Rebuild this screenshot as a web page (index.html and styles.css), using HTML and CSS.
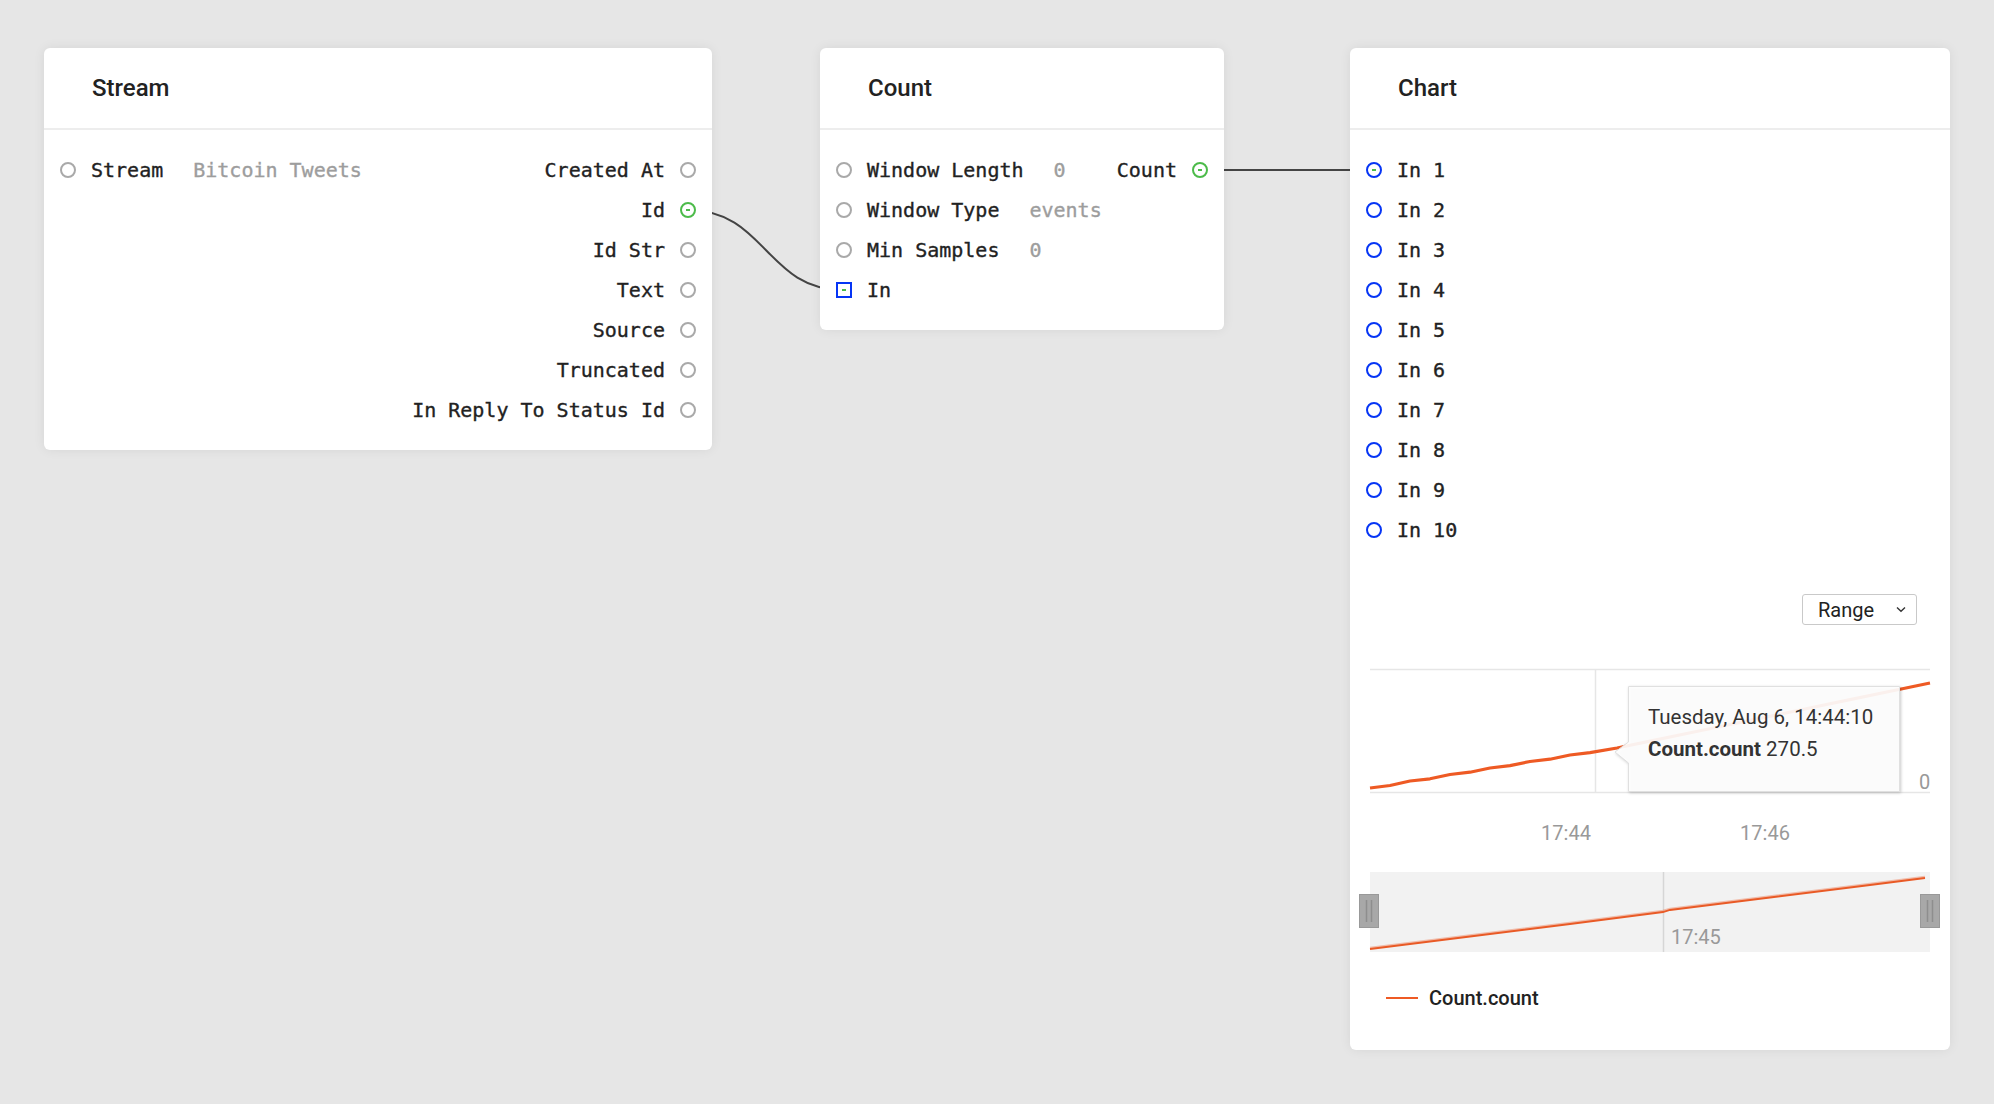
FILE: index.html
```html
<!DOCTYPE html>
<html>
<head>
<meta charset="utf-8">
<title>Flow</title>
<link rel="stylesheet" href="styles.css">
</head>
<body>
<div class="canvas">
  <svg class="wires" width="1994" height="1104" viewBox="0 0 1994 1104">
    <path d="M688 210 C766 210 766 290 843 290"/>
    <path d="M1200 170 L1374 170"/>
  </svg>

  <div class="node node-stream">
    <div class="node-head">Stream</div>
    <div class="node-body">
      <div class="ports ports-in">
        <div class="row"><span class="port"></span><span class="label">Stream</span><span class="value">Bitcoin Tweets</span></div>
      </div>
      <div class="ports ports-out">
        <div class="row"><span class="label">Created At</span><span class="port"></span></div>
        <div class="row"><span class="label">Id</span><span class="port on"></span></div>
        <div class="row"><span class="label">Id Str</span><span class="port"></span></div>
        <div class="row"><span class="label">Text</span><span class="port"></span></div>
        <div class="row"><span class="label">Source</span><span class="port"></span></div>
        <div class="row"><span class="label">Truncated</span><span class="port"></span></div>
        <div class="row"><span class="label">In Reply To Status Id</span><span class="port"></span></div>
      </div>
    </div>
  </div>

  <div class="node node-count">
    <div class="node-head">Count</div>
    <div class="node-body">
      <div class="ports ports-in">
        <div class="row"><span class="port"></span><span class="label">Window Length</span><span class="value">0</span></div>
        <div class="row"><span class="port"></span><span class="label">Window Type</span><span class="value">events</span></div>
        <div class="row"><span class="port"></span><span class="label">Min Samples</span><span class="value">0</span></div>
        <div class="row"><span class="port blue square dot"></span><span class="label">In</span></div>
      </div>
      <div class="ports ports-out">
        <div class="row"><span class="label">Count</span><span class="port on"></span></div>
      </div>
    </div>
  </div>

  <div class="node node-chart">
    <div class="node-head">Chart</div>
    <div class="ports ports-in chart-inputs">
      <div class="row"><span class="port blue dot"></span><span class="label">In 1</span></div>
      <div class="row"><span class="port blue"></span><span class="label">In 2</span></div>
      <div class="row"><span class="port blue"></span><span class="label">In 3</span></div>
      <div class="row"><span class="port blue"></span><span class="label">In 4</span></div>
      <div class="row"><span class="port blue"></span><span class="label">In 5</span></div>
      <div class="row"><span class="port blue"></span><span class="label">In 6</span></div>
      <div class="row"><span class="port blue"></span><span class="label">In 7</span></div>
      <div class="row"><span class="port blue"></span><span class="label">In 8</span></div>
      <div class="row"><span class="port blue"></span><span class="label">In 9</span></div>
      <div class="row"><span class="port blue"></span><span class="label">In 10</span></div>
    </div>
    <div class="chart-tools">
      <div class="range"><span>Range</span>
        <svg class="chev" width="10" height="7" viewBox="0 0 10 7"><path d="M1 1.5 L5 5.2 L9 1.5"/></svg>
      </div>
    </div>
    <svg class="plot" width="600" height="310" viewBox="0 0 600 310">
      <line class="grid" x1="20" y1="19.5" x2="580" y2="19.5"/>
      <line class="grid" x1="20" y1="142.5" x2="580" y2="142.5"/>
      <line class="grid" x1="245.5" y1="19" x2="245.5" y2="142"/>
      <polyline class="series" points="20,138 40,135.5 60,131 80,128.8 100,124.5 120,122.2 140,118 160,115.6 180,111.5 200,109.2 220,105 240,102.6 267,98 300,91.1 350,80.8 400,70.4 450,60 500,49.6 550,39.2 580,33"/>
      <path class="tip" d="M278.5 36.5 H549.5 V141.5 H278.5 V113 L265 102 L278.5 92 Z"/>
      <text class="tip-text" x="298" y="74">Tuesday, Aug 6, 14:44:10</text>
      <text class="tip-text" x="298" y="106"><tspan class="tip-bold">Count.count</tspan> 270.5</text>
      <text class="axis" x="569" y="139">0</text>
      <text class="axis" x="216" y="190" text-anchor="middle">17:44</text>
      <text class="axis" x="415" y="190" text-anchor="middle">17:46</text>
      <rect class="nav-bg" x="20" y="222" width="560" height="80"/>
      <line class="nav-grid" x1="313.5" y1="222" x2="313.5" y2="302"/>
      <polyline class="nav-glow" points="20,297.8 120,285.3 220,272.8 313,260.8 320,258.8 420,246.3 520,233.8 575,226.8"/>
      <polyline class="nav-line" points="20,299 120,286.5 220,274 313,262 320,260 420,247.5 520,235 575,228"/>
      <text class="nav-text" x="321" y="294">17:45</text>
      <rect class="handle" x="9.5" y="244.5" width="19" height="33"/>
      <line class="grip" x1="16.5" y1="250" x2="16.5" y2="272"/>
      <line class="grip" x1="21.5" y1="250" x2="21.5" y2="272"/>
      <rect class="handle" x="570.5" y="244.5" width="19" height="33"/>
      <line class="grip" x1="577.5" y1="250" x2="577.5" y2="272"/>
      <line class="grip" x1="582.5" y1="250" x2="582.5" y2="272"/>
    </svg>
    <div class="legend"><span class="legend-swatch"></span><span class="legend-label">Count.count</span></div>
  </div>
</div>
</body>
</html>
```

FILE: styles.css
```css
* { box-sizing: border-box; }
html, body { margin: 0; padding: 0; }
body {
  background: #e6e6e6;
  font-family: Roboto, "Liberation Sans", sans-serif;
  color: #222;
}
.canvas {
  position: relative;
  width: 1994px;
  height: 1104px;
  overflow: hidden;
}
.wires {
  position: absolute;
  left: 0;
  top: 0;
  z-index: 0;
}
.wires path {
  fill: none;
  stroke: #444;
  stroke-width: 2;
}
.node {
  position: absolute;
  z-index: 1;
  background: #fff;
  border-radius: 6px;
  box-shadow: 0 0 12px rgba(0, 0, 0, 0.07);
}
.node-stream { left: 44px; top: 48px; width: 668px; }
.node-count { left: 820px; top: 48px; width: 404px; }
.node-chart { left: 1350px; top: 48px; width: 600px; }

.node-head {
  height: 82px;
  padding-left: 48px;
  display: flex;
  align-items: center;
  font-size: 24px;
  font-weight: 500;
  color: #222;
  border-bottom: 2px solid #ededed;
}
.node-body {
  display: flex;
  justify-content: space-between;
  padding: 20px 16px;
}
.ports {
  display: flex;
  flex-direction: column;
}
.ports-out { align-items: flex-end; }
.row {
  height: 40px;
  display: flex;
  align-items: center;
  font-family: "DejaVu Sans Mono", "Liberation Mono", monospace;
  font-size: 20px;
  color: #222;
  white-space: nowrap;
  -webkit-text-stroke: 0.35px #222;
}
.port {
  position: relative;
  flex: none;
  width: 16px;
  height: 16px;
  border: 2px solid #a9a9a9;
  border-radius: 50%;
}
.ports-in .port { margin-right: 15px; }
.ports-out .port { margin-left: 15px; }
.value {
  margin-left: 30px;
  color: #9d9d9d;
  -webkit-text-stroke: 0.35px #9d9d9d;
}
.port.on { border-color: #4cbb4a; }
.port.on::after,
.port.dot::after {
  content: "";
  position: absolute;
  left: 4px;
  top: 5px;
  width: 4px;
  height: 2px;
  background: #4cbb4a;
}
.port.blue {
  border-color: #0635f5;
}
.port.square { border-radius: 0; }

.chart-inputs { padding: 20px 16px 0; }
.chart-tools {
  margin-top: 44px;
  display: flex;
  justify-content: flex-end;
  padding-right: 33px;
}
.range {
  width: 115px;
  height: 31px;
  border: 1.5px solid #c9c9c9;
  border-radius: 3px;
  padding: 0 10px 0 15px;
  display: flex;
  align-items: center;
  justify-content: space-between;
  font-size: 20px;
  color: #222;
}
.chev path {
  fill: none;
  stroke: #333;
  stroke-width: 1.4;
}
.plot {
  display: block;
  margin-top: 25px;
}
.grid { stroke: #e6e6e6; stroke-width: 1.5; }
.series {
  fill: none;
  stroke: #ee5a24;
  stroke-width: 3.2;
  stroke-linejoin: round;
}
.tip {
  fill: rgba(255, 255, 255, 0.92);
  stroke: #e0e0e0;
  stroke-width: 1;
  filter: drop-shadow(1.5px 1.5px 1.5px rgba(0, 0, 0, 0.22));
}
.tip-text {
  font-family: Roboto, "Liberation Sans", sans-serif;
  font-size: 20.5px;
  fill: #333;
}
.tip-bold { font-weight: 700; }
.axis {
  font-family: Roboto, "Liberation Sans", sans-serif;
  font-size: 20px;
  fill: #999;
}
.nav-bg { fill: #f2f2f2; }
.nav-grid { stroke: #d6d6d6; stroke-width: 1.5; }
.nav-glow {
  fill: none;
  stroke: rgba(238, 90, 36, 0.35);
  stroke-width: 2;
}
.nav-line {
  fill: none;
  stroke: #e95a26;
  stroke-width: 1.8;
}
.nav-text {
  font-family: Roboto, "Liberation Sans", sans-serif;
  font-size: 20px;
  fill: #999;
}
.handle {
  fill: #a8a8a8;
  stroke: #999;
  stroke-width: 1;
}
.grip { stroke: #8e8e8e; stroke-width: 1.5; }

.legend {
  margin-top: 23px;
  height: 30px;
  padding-left: 36px;
  display: flex;
  align-items: center;
  gap: 11px;
  margin-bottom: 37px;
}
.legend-swatch {
  width: 32px;
  height: 2px;
  background: #ee5a24;
}
.legend-label {
  font-size: 20px;
  font-weight: 500;
  color: #222;
}
```
